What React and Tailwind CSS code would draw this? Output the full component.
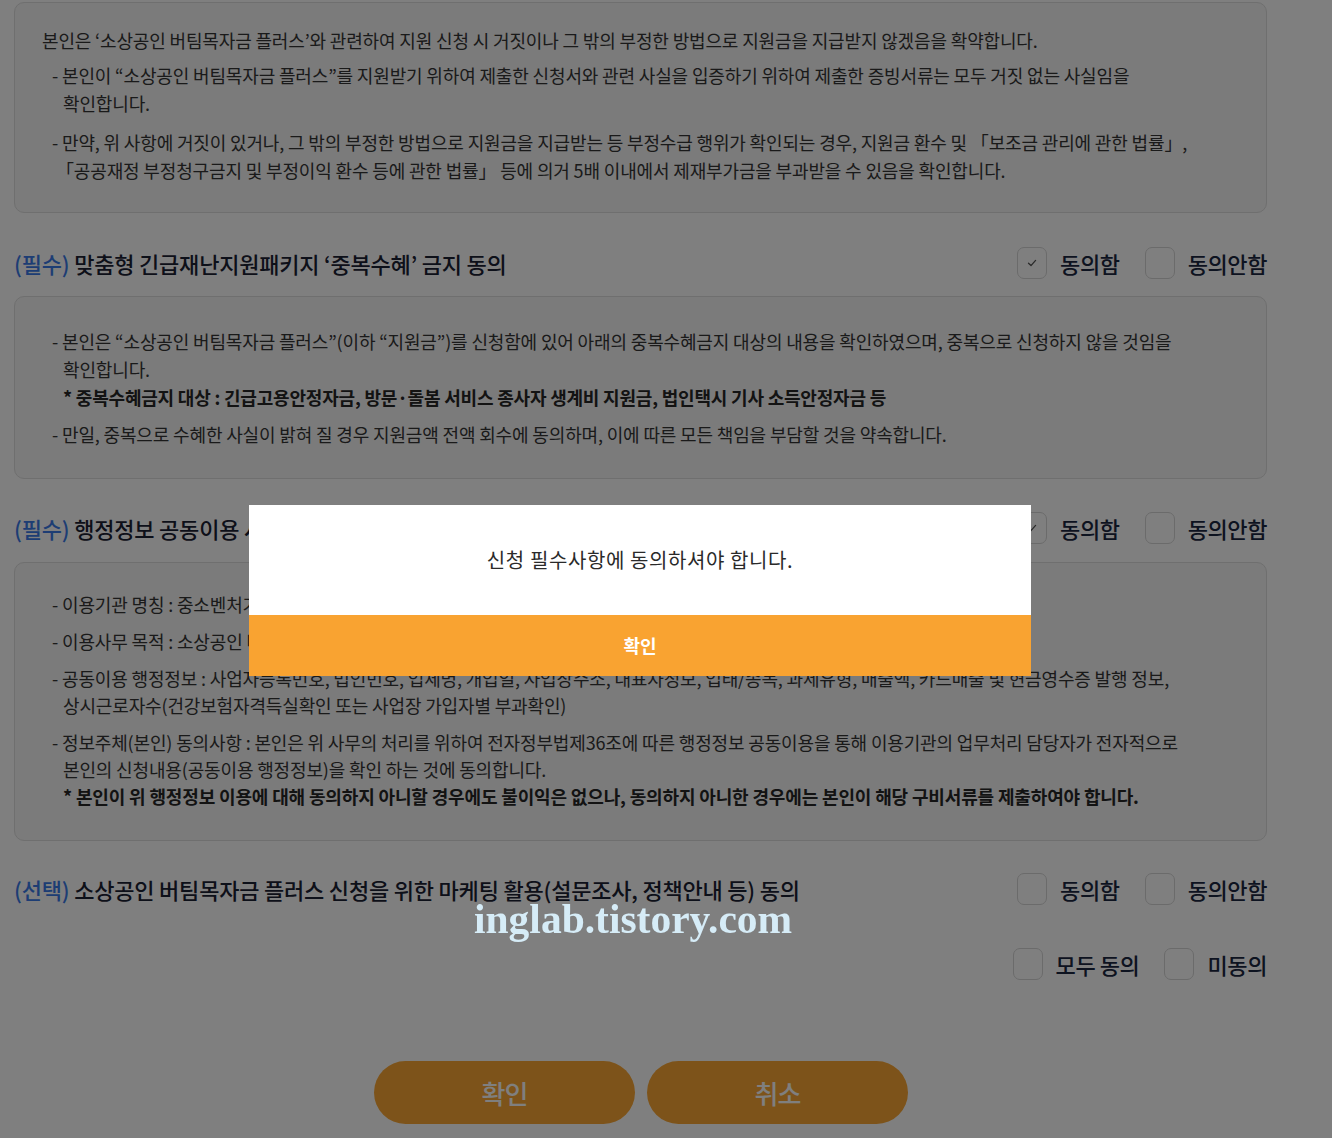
import React from 'react';

const Check = () => (
  <svg width="12" height="12" viewBox="0 0 12 12" fill="none">
    <path d="M2.5 6.3 L5 8.6 L9.6 3.4" stroke="#555" strokeWidth="1.3" strokeLinecap="round" strokeLinejoin="round" />
  </svg>
);

function Box({ checked }) {
  return (
    <span className="w-[30px] h-[32px] rounded-[7px] border border-[#d6d6d6] bg-white flex items-center justify-center">
      {checked && <Check />}
    </span>
  );
}

function Choice({ checked, label }) {
  return (
    <label className="flex items-center gap-[13px]">
      <Box checked={checked} />
      <span className="text-[22px] tracking-[-0.4px] font-medium text-[#1a2640] leading-none">{label}</span>
    </label>
  );
}

function TitleRow({ tag, title, agree }) {
  return (
    <div className="flex items-center justify-between h-[32px]">
      <h3 className="text-[22px] tracking-[-0.2px] font-medium text-[#1a2133] whitespace-nowrap">
        <span className="text-[#3b7ae8]">({tag})</span> {title}
      </h3>
      <div className="flex items-center gap-[25px]">
        <Choice checked={agree} label="동의함" />
        <Choice label="동의안함" />
      </div>
    </div>
  );
}

export default function App() {
  return (
    <div className="relative h-[1138px] overflow-hidden bg-white font-['Noto_Sans_CJK_KR',sans-serif] text-[#353535]">
      <div className="ml-[14px] w-[1253px] pt-[2px]">
        {/* 거짓 신청 확약 */}
        <div className="rounded-[10px] border border-[#dedede] bg-[#f6f6f6] pl-[27px] pr-4 pt-[23px] pb-[28px] text-[18px] tracking-[-0.15px] leading-[28px] whitespace-nowrap">
          <p>본인은 ‘소상공인 버팀목자금 플러스’와 관련하여 지원 신청 시 거짓이나 그 밖의 부정한 방법으로 지원금을 지급받지 않겠음을 확약합니다.</p>
          <p className="mt-[7px] pl-[10px]">- 본인이 “소상공인 버팀목자금 플러스”를 지원받기 위하여 제출한 신청서와 관련 사실을 입증하기 위하여 제출한 증빙서류는 모두 거짓 없는 사실임을<br /><span className="pl-[11px]">확인합니다.</span></p>
          <p className="mt-[11px] pl-[10px]">- 만약, 위 사항에 거짓이 있거나, 그 밖의 부정한 방법으로 지원금을 지급받는 등 부정수급 행위가 확인되는 경우, 지원금 환수 및 「보조금 관리에 관한 법률」,<br /><span className="pl-[4px]">「공공재정 부정청구금지 및 부정이익 환수 등에 관한 법률」 등에 의거 5배 이내에서 제재부가금을 부과받을 수 있음을 확인합니다.</span></p>
        </div>

        <div className="mt-[34px]">
          <TitleRow tag="필수" title="맞춤형 긴급재난지원패키지 ‘중복수혜’ 금지 동의" agree />
        </div>
        <div className="mt-[17px] rounded-[10px] border border-[#dedede] bg-[#f6f6f6] pl-[37px] pr-4 pt-[30px] pb-[30px] text-[18px] tracking-[-0.15px] leading-[28px] whitespace-nowrap">
          <p>- 본인은 “소상공인 버팀목자금 플러스”(이하 “지원금”)를 신청함에 있어 아래의 중복수혜금지 대상의 내용을 확인하였으며, 중복으로 신청하지 않을 것임을<br /><span className="pl-[11px]">확인합니다.</span><br /><span className="pl-[11px] font-bold tracking-[-0.2px] text-[#262626]">* 중복수혜금지 대상 : 긴급고용안정자금, 방문·돌봄 서비스 종사자 생계비 지원금, 법인택시 기사 소득안정자금 등</span></p>
          <p className="mt-[9px]">- 만일, 중복으로 수혜한 사실이 밝혀 질 경우 지원금액 전액 회수에 동의하며, 이에 따른 모든 책임을 부담할 것을 약속합니다.</p>
        </div>

        <div className="mt-[33px]">
          <TitleRow tag="필수" title="행정정보 공동이용 사전 동의" agree />
        </div>
        <div className="mt-[18px] rounded-[10px] border border-[#dedede] bg-[#f6f6f6] pl-[37px] pr-4 pt-[28px] pb-[30px] text-[18px] tracking-[-0.15px] leading-[27px] whitespace-nowrap">
          <p>- 이용기관 명칭 : 중소벤처기업부, 소상공인시장진흥공단</p>
          <p className="mt-[10px]">- 이용사무 목적 : 소상공인 버팀목자금 플러스 지급 대상 확인</p>
          <p className="mt-[10px]">- 공동이용 행정정보 : 사업자등록번호, 법인번호, 업체명, 개업일, 사업장주소, 대표자정보, 업태/종목, 과세유형, 매출액, 카드매출 및 현금영수증 발행 정보,<br /><span className="pl-[11px]">상시근로자수(건강보험자격득실확인 또는 사업장 가입자별 부과확인)</span></p>
          <p className="mt-[10px]">- 정보주체(본인) 동의사항 : 본인은 위 사무의 처리를 위하여 전자정부법제36조에 따른 행정정보 공동이용을 통해 이용기관의 업무처리 담당자가 전자적으로<br /><span className="pl-[11px]">본인의 신청내용(공동이용 행정정보)을 확인 하는 것에 동의합니다.</span><br /><span className="pl-[11px] font-bold tracking-[-0.15px] text-[#262626]">* 본인이 위 행정정보 이용에 대해 동의하지 아니할 경우에도 불이익은 없으나, 동의하지 아니한 경우에는 본인이 해당 구비서류를 제출하여야 합니다.</span></p>
        </div>

        <div className="mt-[32px]">
          <TitleRow tag="선택" title="소상공인 버팀목자금 플러스 신청을 위한 마케팅 활용(설문조사, 정책안내 등) 동의" />
        </div>

        <div className="mt-[43px] flex justify-end items-center gap-[25px]">
          <Choice label="모두 동의" />
          <Choice label="미동의" />
        </div>

        <div className="mt-[81px] flex justify-center gap-[12px] pl-[1px]">
          <button className="w-[261px] h-[63px] rounded-full bg-[#fba734] text-white font-medium text-[26px] tracking-[-1px]">확인</button>
          <button className="w-[261px] h-[63px] rounded-full bg-[#fba734] text-white font-medium text-[26px] tracking-[-1px]">취소</button>
        </div>
      </div>

      {/* dim layer */}
      <div className="fixed inset-0 bg-black/50" />

      {/* watermark */}
      <div className="absolute left-[474px] top-[899px] font-['Liberation_Serif',serif] font-bold text-[41.5px] leading-none text-[#d6ecf7]">
        inglab.tistory.com
      </div>

      {/* alert */}
      <div className="absolute left-[249px] top-[505px] w-[782px] bg-white">
        <div className="h-[110px] flex items-center justify-center text-[20px] tracking-[0.6px] text-[#2a2a2a] pb-[1px]">
          신청 필수사항에 동의하셔야 합니다.
        </div>
        <button className="w-full h-[61px] bg-[#f9a331] text-white font-bold text-[18px]">확인</button>
      </div>
    </div>
  );
}
